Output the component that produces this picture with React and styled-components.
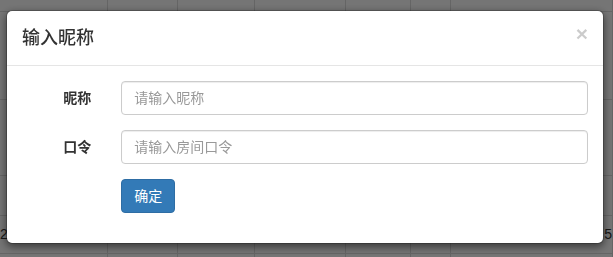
import React from "react";
import styled, { createGlobalStyle } from "styled-components";

const Global = createGlobalStyle`
  html, body { margin: 0; padding: 0; }
  body {
    font-family: "Liberation Sans", "Noto Sans CJK SC", Arial, sans-serif;
    font-size: 14px;
    line-height: 1.42857;
    color: #333;
    background: #fff;
    overflow: hidden;
  }
  * { box-sizing: border-box; }
`;

const Page = styled.div`
  width: 613px;
  height: 257px;
  overflow: hidden;
`;

const Grid = styled.div`
  display: grid;
  grid-template-columns: 108px 70px 77px 91px 65px 40px 1fr;
  grid-template-rows: 12px 88px 76px 40px 38px 30px;
`;

const Cell = styled.div`
  border-right: 1px solid #ddd;
  border-bottom: 1px solid #ddd;
  color: #333;
  font-size: 14px;
  display: flex;
  align-items: center;
  justify-content: ${(p) => (p.$end ? "flex-end" : "flex-start")};
  white-space: nowrap;
  overflow: hidden;
`;

const Backdrop = styled.div`
  position: fixed;
  inset: 0;
  background: #000;
  opacity: 0.54;
`;

const Dialog = styled.div`
  position: fixed;
  top: 10px;
  left: 6px;
  width: 598px;
  background: #fff;
  border: 1px solid rgba(0, 0, 0, 0.2);
  border-radius: 6px;
  box-shadow: 0 3px 9px rgba(0, 0, 0, 0.5);
  background-clip: padding-box;
`;

const Header = styled.div`
  display: flex;
  align-items: flex-start;
  justify-content: space-between;
  height: 55px;
  padding: 15px;
  border-bottom: 1px solid #e5e5e5;
`;

const Title = styled.h4`
  margin: 0;
  font-size: 18px;
  font-weight: 500;
  line-height: 24px;
  color: #333;
`;

const Close = styled.button`
  margin-top: -3px;
  padding: 0;
  border: 0;
  background: transparent;
  font-family: "Liberation Sans", Arial, sans-serif;
  font-size: 21px;
  font-weight: bold;
  line-height: 1;
  color: #000;
  opacity: 0.2;
  cursor: pointer;
`;

const Body = styled.div`
  padding: 15px 0;
`;

const Row = styled.div`
  display: flex;
  align-items: flex-start;
  margin-bottom: 15px;
`;

const LabelCol = styled.label`
  flex: 0 0 16.6667%;
  padding: 7px 15px 0;
  text-align: right;
  font-weight: bold;
  font-size: 14px;
  line-height: 20px;
  color: #333;
`;

const FieldCol = styled.div`
  flex: 0 0 83.3333%;
  padding: 0 15px;
`;

const Input = styled.input`
  display: block;
  width: 100%;
  height: 34px;
  padding: 6px 12px;
  font-family: inherit;
  font-size: 14px;
  line-height: 1.42857;
  color: #555;
  background: #fff;
  border: 1px solid #ccc;
  border-radius: 4px;
  box-shadow: inset 0 1px 1px rgba(0, 0, 0, 0.075);
  outline: none;
  &::placeholder { color: #999; }
`;

const Button = styled.button`
  display: block;
  height: 34px;
  padding: 6px 12px;
  font-family: inherit;
  font-size: 14px;
  line-height: 20px;
  color: #fff;
  background: #337ab7;
  border: 1px solid #2e6da4;
  border-radius: 4px;
  cursor: pointer;
`;

const rows = [
  ["", "", "", "", "", "", ""],
  ["", "", "", "", "", "", ""],
  ["", "", "", "", "", "", ""],
  ["", "", "", "", "", "", ""],
  ["2", "", "", "", "", "", "5"],
  ["", "", "", "", "", "", ""],
];

export default function App() {
  return (
    <Page>
      <Global />
      <Grid>
        {rows.map((r, i) =>
          r.map((c, j) => (
            <Cell key={i + "-" + j} $end={j === 6}>
              {c}
            </Cell>
          ))
        )}
      </Grid>
      <Backdrop />
      <Dialog>
        <Header>
          <Title>输入昵称</Title>
          <Close type="button">×</Close>
        </Header>
        <Body>
          <Row>
            <LabelCol>昵称</LabelCol>
            <FieldCol>
              <Input placeholder="请输入昵称" />
            </FieldCol>
          </Row>
          <Row>
            <LabelCol>口令</LabelCol>
            <FieldCol>
              <Input placeholder="请输入房间口令" />
            </FieldCol>
          </Row>
          <Row>
            <LabelCol />
            <FieldCol>
              <Button type="button">确定</Button>
            </FieldCol>
          </Row>
        </Body>
      </Dialog>
    </Page>
  );
}
